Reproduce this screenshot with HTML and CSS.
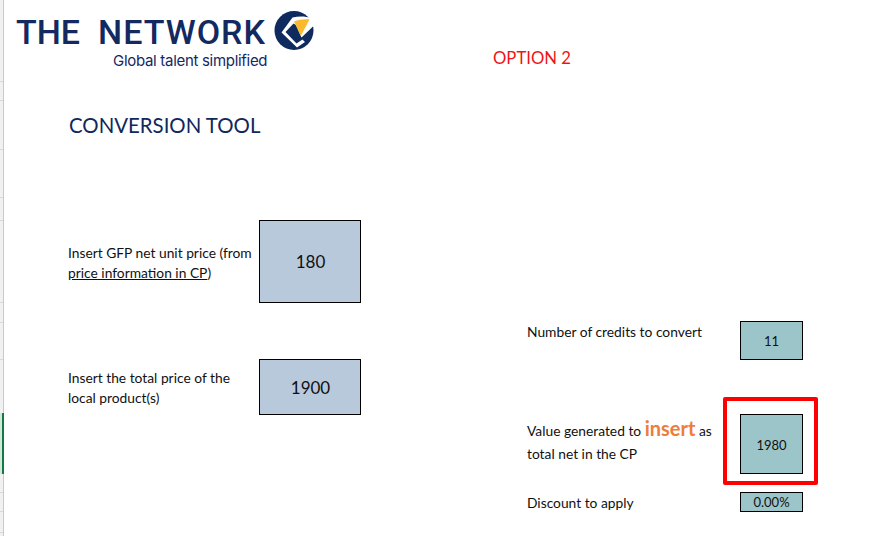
FILE: index.html
```html
<!DOCTYPE html>
<html>
  <head>
    <meta charset="utf-8">
    <title>Conversion Tool</title>
    <link rel="stylesheet" href="styles.css">
  </head>
  <body>
    <svg class="gutter" width="4" height="536" viewBox="0 0 4 536">
      <rect width="3" height="536" fill="#f1f1f1"/>
      <rect x="3" width="1" height="536" fill="#c9c9c9"/>
      <path stroke="#d9d9d9" d="M0 81.500h3M0 100.500h3M0 149.500h3M0 197.500h3M0 220.500h3M0 302.500h3M0 322.500h3M0 359.500h3M0 492.500h3M0 511.500h3M0 532.500h3"/>
      <rect y="413" width="2" height="61" fill="#d5e6db"/>
      <rect x="2" y="413" width="2" height="61" fill="#107c41"/>
    </svg>
    <div class="sheet">
      <header class="top">
        <div class="logo">
          <div class="logo-words">
            <div class="logo-name"><span>THE</span><span class="logo-network">NETWORK</span></div>
            <div class="logo-tag">Global talent simplified</div>
          </div>
          <svg class="logo-mark" width="40" height="41" viewBox="0 0 40 41">
            <circle cx="20" cy="20.500" r="19.500" fill="#0f2a5f"/>
            <path fill="#fff" d="M18.500 7.500C25 6 32 6 37.500 8.500L39.500 16 27.500 27.500 22 15 19.500 13.500 11.500 22 22.500 33.500 28.500 29.500 31 32 23 37.500 7.500 22.500z"/>
            <path fill="#fbb92d" d="M20 11.500C25 9.500 31 9 35.500 9.500L26.800 26z"/>
          </svg>
        </div>
        <div class="option">OPTION 2</div>
      </header>
      <h1 class="title">CONVERSION TOOL</h1>
      <main class="tool">
        <section class="inputs">
          <div class="row row-price">
            <p class="label">Insert GFP net unit price (from<br><span class="link">price information in CP</span>)</p>
            <div class="cell cell-blue cell-price">180</div>
          </div>
          <div class="row row-total">
            <p class="label">Insert the total price of the<br>local product(s)</p>
            <div class="cell cell-blue cell-total">1900</div>
          </div>
        </section>
        <section class="results">
          <div class="result result-credits">
            <p class="label">Number of credits to convert</p>
            <div class="cell cell-teal cell-credits">11</div>
          </div>
          <div class="result result-value">
            <p class="label">Value generated to <span class="insert">insert</span> as<br>total net in the CP</p>
            <div class="highlight">
              <div class="cell cell-teal cell-value">1980</div>
            </div>
          </div>
          <div class="result result-discount">
            <p class="label">Discount to apply</p>
            <div class="cell cell-teal cell-discount">0.00%</div>
          </div>
        </section>
      </main>
    </div>
  </body>
</html>
```

FILE: styles.css
```css
html, body {
  height: 100%;
}
body {
  margin: 0;
  display: flex;
  overflow: hidden;
  background-color: #fff;
  color: #111;
  font-family: Lato, sans-serif;
}
.gutter {
  flex-shrink: 0;
}
.sheet {
  flex: 1;
}
.top {
  display: flex;
  height: 70px;
}
.logo {
  display: flex;
  width: 310px;
  margin-left: 12px;
  padding-top: 10px;
}
.logo-words {
  width: 258px;
  flex-shrink: 0;
  color: #13295f;
}
.logo-name {
  display: flex;
  gap: 18px;
  margin-top: 2px;
  font-family: Roboto, sans-serif;
  font-size: 34px;
  font-weight: 500;
  line-height: 40px;
  white-space: nowrap;
}
.logo-network {
  letter-spacing: 1px;
}
.logo-tag {
  margin-left: 97px;
  font-family: Inter, sans-serif;
  font-size: 15px;
  letter-spacing: -0.3px;
  line-height: 18px;
  white-space: nowrap;
}
.logo-mark {
  flex-shrink: 0;
}
.option {
  margin-left: 167px;
  padding-top: 47px;
  font-size: 16.700px;
  line-height: 22px;
  color: #f01414;
}
.title {
  margin: 43px 0 0 65px;
  font-size: 20.400px;
  font-weight: normal;
  line-height: 24px;
  color: #10285c;
}
.tool {
  display: flex;
  margin-left: 64px;
}
.inputs {
  width: 459px;
  padding-top: 83px;
}
.row {
  display: flex;
  width: 293px;
  justify-content: space-between;
  align-items: center;
}
.row-price {
  margin-bottom: 56px;
}
.label {
  margin: 0;
  font-size: 13.800px;
  line-height: 20px;
  white-space: nowrap;
}
.row .label {
  padding-top: 2px;
}
.link {
  text-decoration: underline;
}
.cell {
  display: flex;
  align-items: center;
  justify-content: center;
  box-sizing: border-box;
  border: 1px solid #000;
  flex-shrink: 0;
}
.cell-blue {
  width: 102px;
  padding-left: 1px;
  font-size: 17px;
  background-color: #b8c9dc;
}
.cell-price {
  height: 83px;
}
.cell-total {
  height: 56px;
}
.cell-teal {
  width: 63px;
  font-size: 13px;
  background-color: #9cc5c9;
}
.results {
  padding-top: 184px;
}
.result {
  display: flex;
  justify-content: space-between;
  width: 276px;
}
.result-credits .label {
  padding-top: 1px;
}
.cell-credits {
  height: 39px;
}
.cell-value {
  height: 60px;
  padding-top: 1px;
}
.cell-discount {
  height: 20px;
}
.result-value {
  margin-top: 37px;
  align-items: center;
}
.result-value .label {
  line-height: 23px;
}
.result-discount {
  margin-top: 7px;
  align-items: center;
}
.result-discount .label {
  padding-top: 1px;
  line-height: 19px;
}
.highlight {
  padding: 13px 11px 7px 13px;
  border: 4px solid #f00;
  border-radius: 2px;
  margin-right: -15px;
}
.insert {
  font-size: 20px;
  font-weight: bold;
  color: #ed7d3a;
}
```
